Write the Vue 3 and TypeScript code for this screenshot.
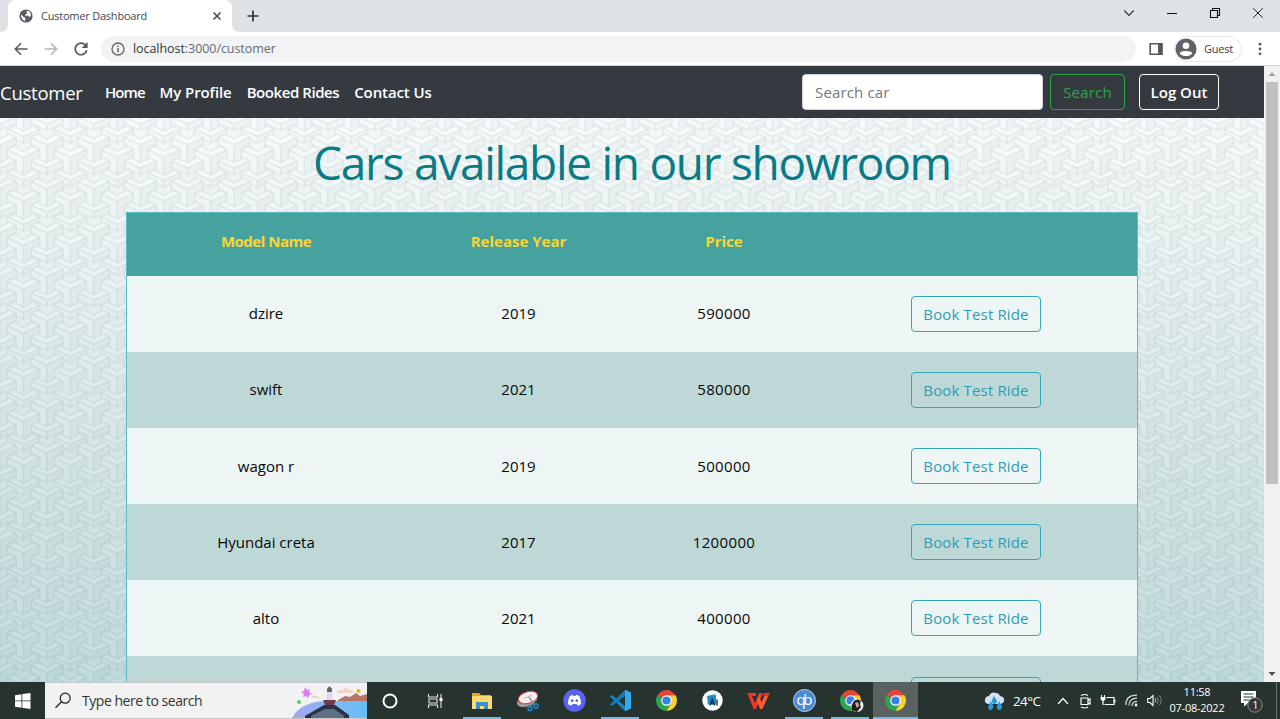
<script setup lang="ts">
interface Car { name: string; year: number; price: number }

const links: string[] = ['Home', 'My Profile', 'Booked Rides', 'Contact Us']
const cars: Car[] = [
  { name: 'dzire', year: 2019, price: 590000 },
  { name: 'swift', year: 2021, price: 580000 },
  { name: 'wagon r', year: 2019, price: 500000 },
  { name: 'Hyundai creta', year: 2017, price: 1200000 },
  { name: 'alto', year: 2021, price: 400000 },
]
const blocks: [number, number][] = [
  [0, -132], [140, -132], [70, -95], [0, 0], [140, 0], [70, 37], [0, 132], [140, 132], [70, 169],
]
</script>

<template>
  <div class="screen">
    <header class="tabs">
      <svg class="tabshape" width="248" height="32" viewBox="0 0 248 32"><path d="M0 32Q8 32 8 24V8Q8 0 16 0H224Q232 0 232 8V24Q232 32 240 32Z" fill="#fff" /></svg>
      <div class="tab">
        <svg width="14" height="14" viewBox="0 0 14 14"><circle cx="7" cy="7" r="6.6" fill="#5a5e62" /><path d="M2 5.5 5 8.2 6.2 8.4V12Q2 11 2 5.5ZM7.5 2H10Q12.3 4 12 6.5L10.4 8.2 9.5 6.8H6.2V5.4L8 4.4Z" fill="#fff" /></svg>
        <span class="tabtitle">Customer Dashboard</span>
        <svg width="10" height="10" viewBox="0 0 10 10"><path d="m1.5 1.5 7 7m0-7-7 7" stroke="#45494d" stroke-width="1.6" /></svg>
      </div>
      <svg class="plus" width="12" height="12" viewBox="0 0 12 12"><path d="M6 .5v11M.5 6h11" stroke="#303337" stroke-width="1.7" /></svg>
      <div class="winbtns">
        <svg width="12" height="12" viewBox="0 0 12 12"><path d="m1.3 3.5 4.7 5 4.7-5" fill="none" stroke="#333" stroke-width="1.1" /></svg>
        <svg width="12" height="12" viewBox="0 0 12 12"><path d="M1 6.5h10" stroke="#111" /></svg>
        <svg width="12" height="12" viewBox="0 0 12 12"><path d="M1.5 3.5h7v7h-7zM3.5 3.5v-2h7v7h-2" fill="none" stroke="#111" stroke-width="1.1" /></svg>
        <svg width="12" height="12" viewBox="0 0 12 12"><path d="m1.3 1.3 9.4 9.4m0-9.4-9.4 9.4" stroke="#222" /></svg>
      </div>
    </header>

    <div class="toolbar">
      <div class="history">
        <svg width="14" height="14" viewBox="0 0 14 14"><path d="M13.5 7H1.5M7 1.3 1.3 7 7 12.7" fill="none" stroke="#55595d" stroke-width="1.6" /></svg>
        <svg width="14" height="14" viewBox="0 0 14 14"><path d="M.5 7h12M7 1.3 12.7 7 7 12.7" fill="none" stroke="#b4b6b8" stroke-width="1.6" /></svg>
        <svg width="14" height="14" viewBox="0 0 14 14"><path d="M11.5 3.2A5.8 5.8 0 1 0 12.7 8.2" fill="none" stroke="#55595d" stroke-width="1.7" /><path d="M13.6 0v6H7.7Z" fill="#55595d" /></svg>
      </div>
      <div class="address">
        <svg width="14" height="14" viewBox="0 0 14 14"><circle cx="7" cy="7" r="6" fill="none" stroke="#606468" stroke-width="1.3" /><path d="M7 6v4.3M7 3.4v1.5" stroke="#606468" stroke-width="1.5" /></svg>
        <span class="url">localhost<i>:3000/customer</i></span>
      </div>
      <svg class="panel" width="14" height="14" viewBox="0 0 14 14"><path d="M1.2 1.7h11.6v10.6H1.2z" fill="#fff" stroke="#55595d" stroke-width="1.6" /><path d="M9 1h4.5v12H9z" fill="#55595d" /></svg>
      <div class="guest">
        <svg width="22" height="22" viewBox="0 0 22 22"><circle cx="11" cy="11" r="10.5" fill="#5f6368" /><circle cx="11" cy="7.8" r="3.3" fill="#fff" /><path d="M4.6 15.2C5.5 12.2 16.5 12.2 17.4 15.2 14.5 19 7.5 19 4.6 15.2Z" fill="#fff" /></svg>
        <span>Guest</span>
      </div>
      <svg class="dots" width="4" height="14" viewBox="0 0 4 14"><g fill="#55595d"><circle cx="2" cy="2.2" r="1.4" /><circle cx="2" cy="7" r="1.4" /><circle cx="2" cy="11.8" r="1.4" /></g></svg>
    </div>

    <div class="viewport">
      <div class="page">
        <svg class="backdrop" width="1264" height="616" viewBox="0 66 1264 616">
          <defs>
            <linearGradient id="wash" x1="0" y1="0" x2="0" y2="1"><stop offset=".08" stop-color="#fdffff" /><stop offset=".4" stop-color="#ebf4f4" /><stop offset=".7" stop-color="#d9e9e9" /><stop offset="1" stop-color="#c7e1e3" /></linearGradient>
            <pattern id="weave" width="46.83" height="44" patternUnits="userSpaceOnUse" patternTransform="translate(0 12.3)">
              <rect width="47" height="44" fill="#f5f7f7" />
              <g transform="scale(.3345 .3333)" stroke="#e3e8e8" stroke-width="3.4" stroke-linejoin="round">
                <g v-for="(p, i) in blocks" :key="`b${i}`" :transform="`translate(${p[0]} ${p[1]})`">
                  <path d="M-22 60V120H22V60Z" fill="#f6f8f8" />
                </g>
                <g v-for="(p, i) in blocks" :key="`c${i}`" :transform="`translate(${p[0]} ${p[1]})`">
                  <path d="M-48 50-24 38 0 55 24 38 48 50 0 72Z" fill="#fbfcfc" />
                  <path d="M-48 50 0 72V91L-48 68Z" fill="#f8fafa" />
                  <path d="M48 50 0 72V91L48 68Z" fill="#f3f5f5" />
                </g>
                <g v-for="(p, i) in blocks" :key="`y${i}`" :transform="`translate(${p[0]} ${p[1]})`">
                  <path d="M-48-20-28-31 0-16 28-31 48-20 0 2Z" fill="#fbfcfc" />
                  <path d="M-48-20 0 2V55L-22 44V14L-48 0Z" fill="#f8fafa" />
                  <path d="M48-20 0 2V55L22 44V14L48 0Z" fill="#f1f4f4" />
                </g>
              </g>
            </pattern>
          </defs>
          <rect y="66" width="1264" height="616" fill="url(#weave)" />
          <rect class="tint" y="66" width="1264" height="616" fill="url(#wash)" />
        </svg>
        <nav class="navbar">
          <span class="brand">Customer</span>
          <div class="links"><a v-for="(l, i) in links" :key="l" :class="`link${i}`">{{ l }}</a></div>
          <div class="field"><span>Search car</span></div>
          <button class="btn search"><span>Search</span></button>
          <button class="btn logout"><span>Log Out</span></button>
        </nav>
        <h1><span>Cars available in our showroom</span></h1>
        <div class="table">
          <div class="row head"><b class="model">Model Name</b><b>Release Year</b><b>Price</b><b></b></div>
          <div v-for="c in cars" :key="c.name" class="row">
            <span>{{ c.name }}</span><span>{{ c.year }}</span><span class="price">{{ c.price }}</span>
            <div class="action"><button class="btn book"><span>Book Test Ride</span></button></div>
          </div>
          <div class="row"><span></span><span></span><span></span><div class="action"><button class="btn book"></button></div></div>
        </div>
      </div>
      <div class="scrollbar">
        <svg width="16" height="16" viewBox="0 0 16 16"><path d="M4.5 10 8 6l3.5 4Z" fill="#a0a0a0" /></svg>
        <div class="thumb"></div>
        <svg width="16" height="16" viewBox="0 0 16 16"><path d="M4.5 6 8 10l3.5-4Z" fill="#505050" /></svg>
      </div>
    </div>

    <footer class="taskbar">
      <div class="start"><svg width="16" height="16" viewBox="0 0 16 16"><path d="M0 2.2 6.5 1.2V7.5H0ZM7.3 1.1 15.5 0V7.5H7.3ZM0 8.3H6.5V14.7L0 13.8ZM7.3 8.3H15.5V16L7.3 14.8Z" fill="#fff" /></svg></div>
      <div class="find">
        <svg width="17" height="17" viewBox="0 0 17 17"><circle cx="10.2" cy="6.2" r="5" fill="none" stroke="#222" stroke-width="1.2" /><path d="m6.5 9.8-6 6" stroke="#222" stroke-width="1.3" /></svg>
        <span>Type here to search</span>
        <svg class="art" width="77" height="35" viewBox="1 2 77 35">
          <defs><linearGradient id="sea"><stop stop-color="#a9a5ef" /><stop offset=".5" stop-color="#83b8f2" /><stop offset="1" stop-color="#67bdf5" /></linearGradient></defs>
          <path d="M3 37Q12 20 39 20H78V37Z" fill="url(#sea)" />
          <path d="M49 19 56 15 61 16 67 12 71 15 78 13V20H49Z" fill="#b8766b" />
          <path d="M48 12Q49 7 54 9 56 5 60 9 66 8 64 12ZM22 17Q24 13 28 15L31 17Z" fill="#f5d3c9" />
          <path d="m16 6 2 3 3-1-1 3 3 2-3 1-1 3-2-2-3 1 1-3-3-2 3-1Z" fill="#dc7df3" />
          <circle cx="69.5" cy="10" r="2" fill="#f2ae22" /><circle cx="10" cy="21" r="2" fill="#56cf78" />
          <path d="M37 20 38 10H43L44 20Z" fill="#dfd9e7" /><path d="M38 8V11H43V8L40.5 5Z" fill="#6b5a68" />
          <path d="M34 19H47L45 24H36Z" fill="#733b4a" /><path d="M16 37V35L35 24H46L60 34V37Z" fill="#2d3148" />
          <path d="M22 37V35L36 28H45L55 35V37Z" fill="#5c7284" />
        </svg>
      </div>
      <div class="apps">
        <div class="app"><svg width="18" height="18" viewBox="0 0 18 18"><circle cx="9" cy="9" r="6.5" fill="none" stroke="#fff" stroke-width="2" /></svg></div>
        <div class="app view"><svg width="18" height="18" viewBox="0 0 18 18"><path d="M2.5 2v3h9V2M2.5 16v-3h9v3M3 7h8v4H3zM15 2v14" fill="none" stroke="#e4e6e5" stroke-width="1.1" /><path d="M13.5 6h3v3h-3z" fill="#fff" /></svg></div>
        <div class="app open"><svg width="22" height="20" viewBox="0 0 22 20"><path d="M1 2H8L10 4H20V18H1Z" fill="#e5a820" /><path d="M1 5H21V18H1Z" fill="#ffda70" /><path d="M5 18V11H17V18H13V15H9V18Z" fill="#3991d4" /></svg></div>
        <div class="app"><svg width="24" height="22" viewBox="0 0 24 22"><ellipse cx="10" cy="11" rx="9.5" ry="5.5" transform="rotate(-20 10 11)" fill="#999" /><ellipse cx="12" cy="7.5" rx="10" ry="5.8" transform="rotate(-16 12 7.5)" fill="#f8efee" stroke="#c84445" /><path d="M8 8.5 16 5" stroke="#c9b4b2" /><path d="M13 7l6 9M21 9l-7 7" stroke="#8b969d" stroke-width="1.4" /><circle cx="14" cy="18.5" r="2" fill="none" stroke="#237fbc" stroke-width="1.8" /><circle cx="20" cy="16" r="2" fill="none" stroke="#237fbc" stroke-width="1.8" /></svg></div>
        <div class="app"><svg width="23" height="23" viewBox="0 0 23 23"><circle cx="11.5" cy="11.5" r="11.2" fill="#5865f2" /><path d="M7 7Q9 6 10 6L10.5 7H12.5L13 6Q15 6 16.2 7 18.5 11 18 15 16 16.5 14.5 16.5L13.5 15H9.5L8.5 16.5Q7 16.5 5 15 4.5 11 7 7Z" fill="#fff" /><circle cx="9.2" cy="11.7" r="1.4" fill="#5865f2" /><circle cx="13.8" cy="11.7" r="1.4" fill="#5865f2" /></svg></div>
        <div class="app open"><svg width="23" height="23" viewBox="0 0 23 23"><path d="M1 7.5 3 6 17 18V22L16 22Z" fill="#1684ca" /><path d="M1 15.5 3 17 17 6V1L16 1Z" fill="#147abc" /><path d="M16 .8 22 3.5V19.5L16 22.3Z" fill="#35a9ec" /></svg></div>
        <div class="app"><svg width="21" height="21" viewBox="0 0 22 22"><path d="M11 11 1.5 5.5A11 11 0 0 1 20.5 5.5H11Z" fill="#e54537" /><path d="M11 11 1.5 5.5A11 11 0 0 0 11 22L15.8 13.8Z" fill="#2da653" /><path d="M11 5.5H20.5A11 11 0 0 1 11 22L15.8 13.8Z" fill="#fbcd36" /><circle cx="11" cy="11" r="5.5" fill="#fff" /><circle cx="11" cy="11" r="4.3" fill="#367ff0" /></svg></div>
        <div class="app"><svg width="21" height="21" viewBox="0 0 21 21"><circle cx="10.5" cy="10.5" r="10.2" fill="#fff" /><path d="m4.5 6 9-2 1 9-8 1Z" fill="#35c28b" /><path d="M6 7.5 8 5.5h6v9H5.5Z" fill="#2389d7" /><path d="M8 15.5 10.3 9.5l2.3 6M8.8 13.5h3M15 9.5v6" stroke="#173545" stroke-width="1.4" fill="none" /></svg></div>
        <div class="app"><svg width="23" height="18" viewBox="0 0 23 18"><path d="M0 1H9V4H5L8 11 12 1H16L9 17H6.5L1.5 4Z" fill="#ee3527" /><path d="M10 8 12 4 14.5 10.5 18.5 1H22.5L15.5 17H13Z" fill="#ff5a31" /><path d="M17 1H22.5L21.3 4H16Z" fill="#e33526" /></svg></div>
        <div class="app open"><svg width="23" height="23" viewBox="0 0 23 23"><circle cx="11.5" cy="11.5" r="11" fill="#4d8cd5" stroke="#b3d2f3" /><text x="3.5" y="15.5" font-size="15" textLength="16" fill="#fff">qb</text></svg></div>
        <div class="app open"><svg class="profile" width="24" height="23" viewBox="0 0 24 23"><g transform="translate(0 1) scale(.95)"><path d="M11 11 1.5 5.5A11 11 0 0 1 20.5 5.5H11Z" fill="#e54537" /><path d="M11 11 1.5 5.5A11 11 0 0 0 11 22L15.8 13.8Z" fill="#2da653" /><path d="M11 5.5H20.5A11 11 0 0 1 11 22L15.8 13.8Z" fill="#fbcd36" /><circle cx="11" cy="11" r="5.5" fill="#fff" /><circle cx="11" cy="11" r="4.3" fill="#367ff0" /></g><circle cx="17" cy="16.5" r="6.5" fill="#eee" /><path d="M11.5 21Q11 11 18 10.5L21 12Q19 15 21 18L17 23Z" fill="#25201f" /><path d="m15 14 3-1 1 4-2 2Z" fill="#d3a995" /></svg></div>
        <div class="app open active"><svg width="21" height="21" viewBox="0 0 22 22"><path d="M11 11 1.5 5.5A11 11 0 0 1 20.5 5.5H11Z" fill="#e54537" /><path d="M11 11 1.5 5.5A11 11 0 0 0 11 22L15.8 13.8Z" fill="#2da653" /><path d="M11 5.5H20.5A11 11 0 0 1 11 22L15.8 13.8Z" fill="#fbcd36" /><circle cx="11" cy="11" r="5.5" fill="#fff" /><circle cx="11" cy="11" r="4.3" fill="#367ff0" /></svg></div>
      </div>
      <div class="weather"><svg width="21" height="20" viewBox="0 0 21 20"><path d="M4 13Q0 12 1 8 2 5 5 5 7 0 12 2 15 2 16 5 21 6 20 10 19 13 16 13Z" fill="#d3e0f6" /><path d="M10 5l3 5Q13 13 10 13 7 12 8 9ZM6.5 10l3 5Q9 19 6.5 19 3 18 4.5 15ZM15 10l3 5Q18 19 15 19 12 18 13 15Z" fill="#279be0" /></svg><span>24°C</span></div>
      <div class="tray">
        <svg width="12" height="12" viewBox="0 0 12 12"><path d="m1 9 5-5.5L11 9" fill="none" stroke="#fff" stroke-width="1.2" /></svg>
        <svg width="13" height="16" viewBox="0 0 13 16"><path d="M3 5h7v6.5H3zM10 7l2-1v5l-2-1M3 2.5Q7 .5 10 2.5M3 14Q7 16 10 14" fill="none" stroke="#fff" stroke-width="1.2" /></svg>
        <svg width="16" height="13" viewBox="0 0 16 13"><path d="M6.500 3.500H14v7H4.500M14.800 5.500v3M3 6v5" fill="none" stroke="#fff" stroke-width="1.2" /><path d="M1.500 1v2M4.500 1v2" stroke="#fff" /><path d="M.5 3h5v2q-1 2-2.500 2Q1.500 7 .5 5Z" fill="#fff" /></svg>
        <svg width="13" height="13" viewBox="0 0 13 13"><path d="M.8 11Q1 1 12 1.200M4 11.500Q4 4.500 12 4.200M7 12Q7 7.500 12 7.300" fill="none" stroke="#d7d9d8" stroke-width="1.2" /><circle cx="11" cy="11" r="1.400" fill="#fff" /></svg>
        <svg width="16" height="13" viewBox="0 0 16 13"><path d="M.7 4.500H3l3-3v10l-3-3H.7Z" fill="none" stroke="#fff" stroke-width="1.1" /><path d="M8 4.500q1.500 2 0 4" stroke="#ddd" fill="none" /><path d="M10 3q3 3.500 0 7M12.300 1.500q4 5 0 10" fill="none" stroke="#7d8583" /></svg>
      </div>
      <div class="clock"><span>11:58</span><span>07-08-2022</span></div>
      <svg class="note" width="24" height="24" viewBox="0 0 24 24"><path d="M1 2H16V14H8L4 17.5V14H1Z" fill="#fff" /><path d="M3.5 5h10M3.5 8h10M3.5 11h6" stroke="#26322f" stroke-width="1.1" /><circle cx="15" cy="16" r="7.2" fill="#303837" stroke="#858c8b" /><text x="12.2" y="20" font-size="11" fill="#fff">1</text></svg>
      <div class="peek"></div>
    </footer>
  </div>
</template>

<style>
body { margin: 0; overflow: hidden; }
</style>

<style scoped>
* { box-sizing: border-box; }
.screen { width: 1280px; height: 719px; display: flex; flex-direction: column; overflow: hidden; font-family: "Open Sans", sans-serif; }
svg { display: block; flex: none; }
span, a, b { white-space: nowrap; }
.tabs { position: relative; height: 32px; background: #dee1e6; display: flex; align-items: center; }
.tabshape { position: absolute; left: 0; top: 0; }
.tab { position: relative; width: 232px; padding: 0 10px 0 19px; display: flex; align-items: center; }
.tabtitle { flex: 1; margin: -2px 0 0 8px; font-size: 11px; letter-spacing: -.22px; color: #45494d; }
.plus { margin-left: 15px; }
.winbtns { margin-left: auto; padding: 0 16px 6px 0; display: flex; gap: 31px; }
.toolbar { height: 34px; background: #fff; display: flex; align-items: center; border-bottom: 1px solid #d0d3d5; }
.history { display: flex; gap: 16px; margin-left: 14px; width: 87px; }
.address { width: 1035px; height: 26px; padding-left: 10px; border-radius: 13px; background: #f1f3f4; display: flex; align-items: center; gap: 8px; }
.url { font-size: 12.5px; letter-spacing: -.06px; color: #34373b; }
.url i { font-style: normal; color: #686c70; }
.panel { margin-left: 13px; }
.guest { margin-left: 11px; width: 68px; height: 26px; border: 1px solid #e7e8ea; border-radius: 13px; display: flex; align-items: center; gap: 7px; font-size: 11px; letter-spacing: -.2px; color: #3c4043; }
.dots { margin-left: 16px; }
.viewport { flex: 1; min-height: 0; display: flex; overflow: hidden; }
.page { position: relative; width: 1264px; height: 616px; overflow: hidden; }
.backdrop { position: absolute; left: 0; top: 0; isolation: isolate; }
.tint { mix-blend-mode: multiply; }
.navbar { position: relative; height: 52px; background: #343a40; color: #fff; display: flex; align-items: center; }
.brand { width: 105px; font-size: 18.5px; font-weight: 500; letter-spacing: -.25px; }
.links { width: 697px; display: flex; gap: 15px; font-size: 15px; font-weight: 600; }
.link0 { letter-spacing: -.95px; }
.link1 { letter-spacing: -.1px; }
.link2 { letter-spacing: -.43px; }
.link3 { letter-spacing: -.1px; }
.field { width: 241px; height: 36px; background: #fff; border: 1px solid #ced4da; border-radius: 4px; color: #707880; font-size: 15px; font-weight: 500; letter-spacing: .15px; display: flex; align-items: center; padding: 0 0 1px 12px; }
.btn { height: 36px; border-radius: 4px; border: 1px solid; background: transparent; font: 500 15px "Open Sans", sans-serif; padding: 0 0 1px; display: flex; align-items: center; justify-content: center; }
.search { margin-left: 7px; width: 75px; color: #28a745; letter-spacing: .2px; }
.logout { margin-left: 14px; width: 80px; color: #fff; font-weight: 600; }
h1 { position: relative; margin: 0; height: 94px; color: #087b87; font-size: 46px; font-weight: 500; letter-spacing: -1.28px; text-align: center; line-height: 88px; }
.table { position: relative; margin-left: 126px; width: 1012px; border: 1px solid #5dbac7; }
.row { display: grid; grid-template-columns: 278px 227px 184px 321px; height: 76.1px; align-items: center; justify-items: center; background: #eef5f5; font-size: 15px; font-weight: 500; color: #080808; }
.row > span { margin-top: -1.4px; }
.price { letter-spacing: .35px; }
.row:nth-child(odd) { background: #bed8d7; }
.row.head { height: 63px; background: #46a29f; color: #fbd435; padding-bottom: 7px; }
.model { letter-spacing: -.5px; }
.book { width: 130px; color: #2d9db5; border-color: #32a5b8; margin: 0 1px 0 0; letter-spacing: .15px; }
.scrollbar { width: 16px; height: 616px; background: #f1f1f1; display: flex; flex-direction: column; justify-content: space-between; }
.thumb { height: 402px; margin: 0 2px 182px 2px; background: #c1c1c1; }
.taskbar { height: 37px; flex: none; background: #27332f; color: #fff; display: flex; align-items: center; }
.start { width: 45px; display: flex; justify-content: center; }
.find { width: 322px; height: 37px; background: #f2f2f2; border: 1px solid #c8caca; border-width: 1px 0; display: flex; align-items: center; padding-left: 10px; font-size: 14px; color: #333; }
.find span { margin-left: 10px; width: 203px; letter-spacing: -.46px; }
.find .art { margin-left: 5px; }
.apps { display: flex; height: 37px; }
.app { width: 46px; display: flex; align-items: center; justify-content: center; }
.view svg { margin-right: 3px; }
.open { border-bottom: 2px solid #76b9ed; margin: 0 4px; width: 38px; }
.open svg { margin-top: 2px; }
.open .profile { margin-left: 3px; }
.active { background: #59625f; width: 45px; margin: 0 1px 0 0; }
.weather { margin-left: 65px; display: flex; align-items: center; gap: 8px; font-size: 13.5px; letter-spacing: -.6px; }
.weather span { width: 36px; }
.tray { margin-left: 8px; display: flex; align-items: center; gap: 9px; }
.clock { width: 60px; margin-left: 4px; display: flex; flex-direction: column; align-items: center; font-size: 11px; letter-spacing: -.25px; line-height: 16px; padding-bottom: 1px; }
.note { margin-left: 13px; }
.peek { margin-left: auto; width: 4px; height: 37px; border-left: 1px solid #66706d; }
</style>
